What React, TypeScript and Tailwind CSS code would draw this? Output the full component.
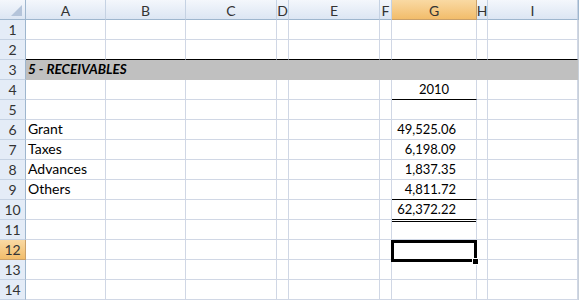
import React from "react";

const colNames = ["A", "B", "C", "D", "E", "F", "G", "H", "I"];

const labels: Record<number, string> = {
  6: "Grant",
  7: "Taxes",
  8: "Advances",
  9: "Others",
};
const values: Record<number, string> = {
  6: "49,525.06",
  7: "6,198.09",
  8: "1,837.35",
  9: "4,811.72",
  10: "62,372.22",
};

function ColHeader({ name }: { name: string }) {
  const sel = name === "G";
  return (
    <div
      className={
        sel
          ? "flex items-center justify-center border-r border-b border-r-[#c9a06a] border-b-[#c9a06a] bg-gradient-to-b from-[#f9d9a3] to-[#f2bd6a] text-[#333] text-[14px] pt-[1px]"
          : "flex items-center justify-center border-r border-b border-r-[#c5d2e3] border-b-[#9eb6ce] bg-gradient-to-b from-[#f4f7fc] to-[#dce6f3] text-[#333] text-[14px] pt-[1px]"
      }
    >
      {name}
    </div>
  );
}

function RowHeader({ n }: { n: number }) {
  const sel = n === 12;
  return (
    <div
      className={
        sel
          ? "flex items-end justify-center border-r border-b border-r-[#c9a06a] border-b-[#c9a06a] bg-gradient-to-b from-[#f9d9a3] to-[#f2bd6a] text-[#333] text-[14px] pb-[1px] leading-[16px]"
          : "flex items-end justify-center border-r border-b border-r-[#9eb6ce] border-b-[#c5d2e3] bg-[#e4ecf7] text-[#333] text-[14px] pb-[1px] leading-[16px]"
      }
    >
      {n}
    </div>
  );
}

function Cell({ r, c }: { r: number; c: string }) {
  if (r === 3) {
    if (c === "A") {
      return (
        <div className="relative z-10 flex items-end whitespace-nowrap bg-[#c0c0c0] border-b border-b-[#c0c0c0] pl-[2px] pb-[2px] leading-[16px] text-[13.5px] font-bold italic text-black">
          5 - RECEIVABLES
        </div>
      );
    }
    return <div className="bg-[#c0c0c0] border-b border-b-[#c0c0c0]" />;
  }
  if (r === 2) {
    return <div className="border-r border-r-[#d0d7e5] border-b border-b-black" />;
  }
  if (c === "A" && labels[r]) {
    return (
      <div className="flex items-end whitespace-nowrap border-r border-b border-[#d0d7e5] pl-[2px] pb-[2px] leading-[16px] text-[14px] text-black">
        {labels[r]}
      </div>
    );
  }
  if (c === "G") {
    if (r === 4) {
      return (
        <div className="flex items-end justify-center border-r border-r-[#d0d7e5] border-b border-b-black pb-[2px] leading-[16px] text-black">
          2010
        </div>
      );
    }
    if (values[r]) {
      const bottom =
        r === 9 || r === 10 ? "border-b-black" : "border-b-[#d0d7e5]";
      return (
        <div
          className={
            "flex items-end justify-end border-r border-r-[#d0d7e5] border-b pr-[20px] pb-[2px] leading-[16px] text-black " +
            bottom
          }
        >
          {values[r]}
        </div>
      );
    }
    if (r === 11) {
      return (
        <div className="border-r border-b border-[#d0d7e5] pt-[1px]">
          <div className="h-px bg-black" />
        </div>
      );
    }
  }
  return <div className="border-r border-b border-[#d0d7e5]" />;
}

export default function App() {
  const rows = Array.from({ length: 14 }, (_, i) => i + 1);
  return (
    <div className="relative w-[579px] h-[302px] overflow-hidden bg-white font-['Lato','Liberation_Sans',sans-serif] text-[13px]">
      <div className="grid grid-cols-[26px_80px_80px_91px_12px_91px_12px_85px_11px_90px_1px] grid-rows-[repeat(15,20px)]">
        <div className="relative border-r border-b border-r-[#9eb6ce] border-b-[#9eb6ce] bg-gradient-to-b from-[#f4f7fc] to-[#dce6f3]">
          <svg
            className="absolute right-[3px] bottom-[3px]"
            width="11"
            height="11"
            viewBox="0 0 11 11"
          >
            <polygon points="11,0 11,11 0,11" fill="#b4c4da" />
          </svg>
        </div>
        {colNames.map((c) => (
          <ColHeader key={c} name={c} />
        ))}
        <div className="bg-[#9eb6ce]" />
        {rows.map((r) => (
          <React.Fragment key={r}>
            <RowHeader n={r} />
            {colNames.map((c) => (
              <Cell key={c} r={r} c={c} />
            ))}
            <div className="bg-[#c8d0da]" />
          </React.Fragment>
        ))}
      </div>
      <div className="absolute left-[391px] top-[240px] w-[86px] h-[22px] border-[3px] border-black" />
      <div className="absolute left-[472px] top-[258px] w-[7px] h-[7px] bg-white p-px">
        <div className="w-full h-full bg-black" />
      </div>
    </div>
  );
}
